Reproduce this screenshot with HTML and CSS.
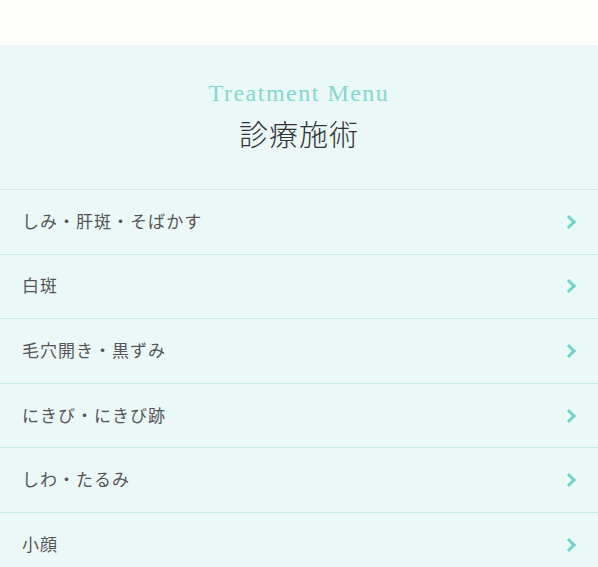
FILE: index.html
```html
<!DOCTYPE html>
<html lang="ja">
<head>
<meta charset="utf-8">
<title>診療施術</title>
<link rel="stylesheet" href="styles.css">
</head>
<body>
<div class="top"></div>
<section class="treat">
	<div class="treat-head">
		<p class="en">Treatment Menu</p>
		<h2 class="ja">診療施術</h2>
	</div>
	<ul class="treat-list">
		<li><a href="">しみ・肝斑・そばかす</a></li>
		<li><a href="">白斑</a></li>
		<li><a href="">毛穴開き・黒ずみ</a></li>
		<li><a href="">にきび・にきび跡</a></li>
		<li><a href="">しわ・たるみ</a></li>
		<li><a href="">小顔</a></li>
	</ul>
</section>
</body>
</html>
```

FILE: styles.css
```css
* {margin:0; padding:0; box-sizing:border-box}
body {background:#fdfdfc; font-family:"Noto Sans CJK JP", sans-serif; color:#555}
li {list-style:none}
a {text-decoration:none; color:inherit}
.top {height:45px; background:#fdfdfc}
.treat {background:#ebf8f8}
.treat-head {height:144px; padding-top:32px; text-align:center}
.treat-head .en {font-family:"Liberation Serif", serif; font-size:24px; line-height:32px; color:#86d7cf; letter-spacing:1.5px}
.treat-head .ja {font-family:"Noto Sans CJK JP", sans-serif; font-weight:300; font-size:29px; line-height:36px; color:#333; margin-top:6px; letter-spacing:1px}
.treat-list {border-top:1px solid #c8ebe7}
.treat-list li {border-bottom:1px solid #c8ebe7}
.treat-list a {display:flex; align-items:center; justify-content:space-between; height:63.6px; padding:0 22px 3px; font-size:17px; letter-spacing:1px}
.treat-list a:after {content:""; width:7px; height:7px; border-top:3px solid #6fd3c9; border-right:3px solid #6fd3c9; transform:rotate(45deg); margin:3px 2px 0 0}
```
